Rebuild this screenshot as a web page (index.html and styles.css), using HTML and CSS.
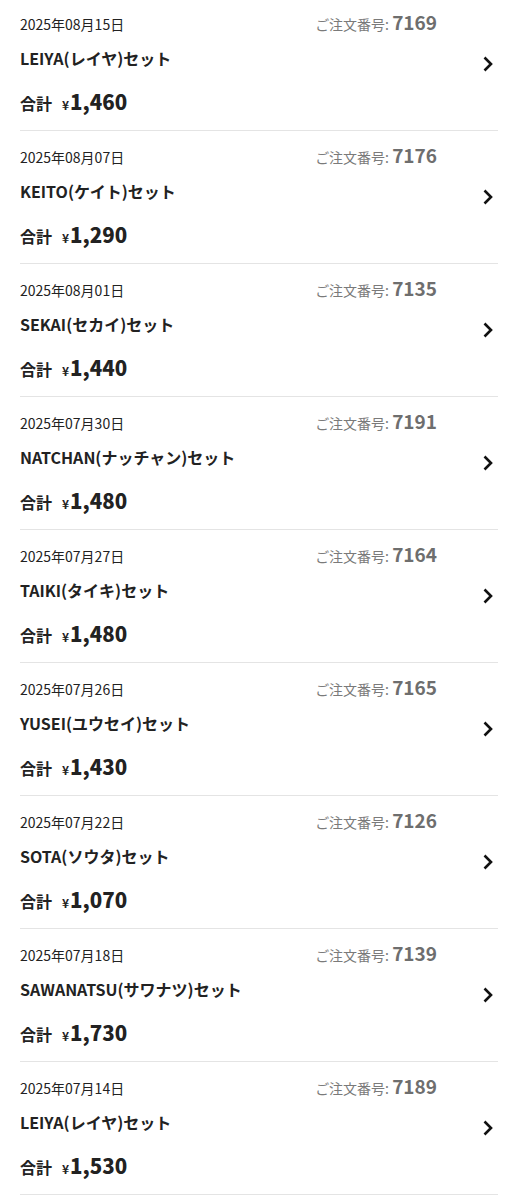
FILE: index.html
```html
<!DOCTYPE html>
<html lang="ja">
<head>
    <meta charset="UTF-8">
    <meta name="viewport" content="width=device-width, initial-scale=1.0">
    <title>注文履歴</title>
    <link rel="stylesheet" href="styles.css">
</head>
<body>
    <div class="orders" id="orders"></div>

    <script>
        const pedidos = [
            ["2025年08月15日", "7169", "LEIYA(レイヤ)セット", "1,460"],
            ["2025年08月07日", "7176", "KEITO(ケイト)セット", "1,290"],
            ["2025年08月01日", "7135", "SEKAI(セカイ)セット", "1,440"],
            ["2025年07月30日", "7191", "NATCHAN(ナッチャン)セット", "1,480"],
            ["2025年07月27日", "7164", "TAIKI(タイキ)セット", "1,480"],
            ["2025年07月26日", "7165", "YUSEI(ユウセイ)セット", "1,430"],
            ["2025年07月22日", "7126", "SOTA(ソウタ)セット", "1,070"],
            ["2025年07月18日", "7139", "SAWANATSU(サワナツ)セット", "1,730"],
            ["2025年07月14日", "7189", "LEIYA(レイヤ)セット", "1,530"]
        ];

        const lista = document.getElementById("orders");
        pedidos.forEach(p => {
            const item = document.createElement("a");
            item.className = "order";
            item.href = "#";
            item.innerHTML =
                '<div class="order-body">' +
                    '<div class="order-head">' +
                        '<span class="date">' + p[0] + '</span>' +
                        '<span class="num">ご注文番号: <b>' + p[1] + '</b></span>' +
                    '</div>' +
                    '<div class="name">' + p[2] + '</div>' +
                    '<div class="total">合計<span class="yen">¥</span><span class="price">' + p[3] + '</span></div>' +
                '</div>' +
                '<div class="chev"><svg width="12" height="16" viewBox="0 0 12 16"><path d="M2.5 1.5 L9 8 L2.5 14.5" fill="none" stroke="#111" stroke-width="2.6"/></svg></div>';
            lista.appendChild(item);
        });
    </script>
</body>
</html>
```

FILE: styles.css
```css
body{
    margin: 0;
    background: #fff;
    color: #222;
    font-family: "Noto Sans CJK JP", "Noto Sans", sans-serif;
}
.orders{
    margin-top: -2px;
}
.order{
    display: flex;
    align-items: center;
    margin: 0 20px;
    border-bottom: 1px solid #e4e4e4;
    color: inherit;
    text-decoration: none;
}
.order-body{
    flex: 1;
    padding: 14px 0 15px;
}
.order-head{
    display: flex;
    justify-content: space-between;
    align-items: baseline;
    height: 20px;
    line-height: 20px;
}
.date{
    font-size: 14px;
}
.num{
    font-size: 14px;
    color: #7a7a7a;
}
.num b{
    font-size: 19px;
    font-weight: 700;
    color: #6e6e6e;
}
.name{
    margin-top: 15px;
    height: 22px;
    font-size: 16px;
    font-weight: 700;
    line-height: 22px;
}
.total{
    display: flex;
    align-items: baseline;
    margin-top: 18px;
    height: 28px;
    font-size: 16px;
    font-weight: 700;
    line-height: 28px;
}
.yen{
    font-size: 12px;
    margin-left: 10px;
    margin-right: 1px;
}
.price{
    font-size: 20.5px;
    font-weight: 900;
}
.chev{
    width: 61px;
    display: flex;
    justify-content: flex-end;
    padding-right: 4px;
    box-sizing: border-box;
}
.chev svg{
    display: block;
}
```
